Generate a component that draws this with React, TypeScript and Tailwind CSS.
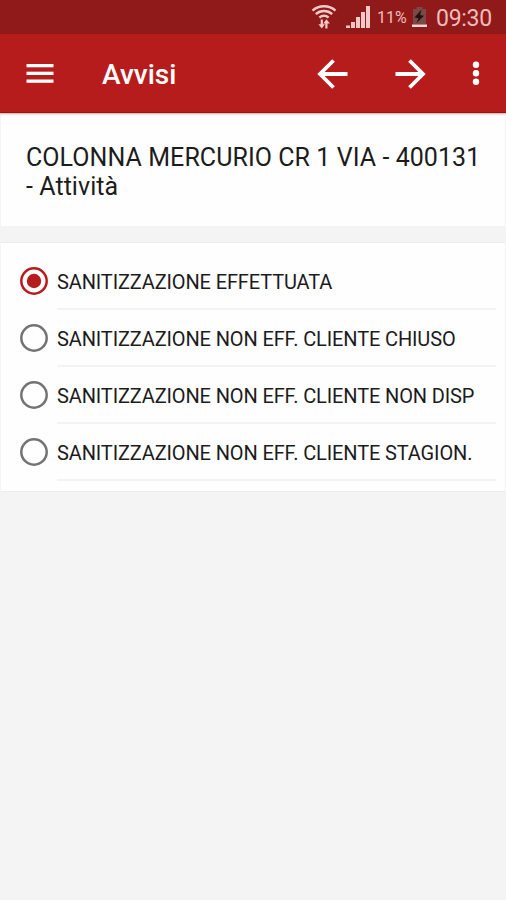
import { useState } from "react";
import clsx from "clsx";

const OPTIONS = [
  "SANITIZZAZIONE EFFETTUATA",
  "SANITIZZAZIONE NON EFF. CLIENTE CHIUSO",
  "SANITIZZAZIONE NON EFF. CLIENTE NON DISP",
  "SANITIZZAZIONE NON EFF. CLIENTE STAGION.",
];

function WifiIcon() {
  return (
    <svg width="26" height="24" viewBox="0 0 26 24" fill="none" stroke="#f3c9c7" strokeWidth="2.4">
      <path d="M1.5 5.6C8 -.2 18 -.2 24.5 5.6" />
      <path d="M4.8 9.2c4.6-4.2 11.8-4.2 16.4 0" />
      <path d="M8.4 12.6c2.6-2.4 6.6-2.4 9.2 0" />
      <path d="M10.8 20v-5.5M15.4 18v5.5" strokeWidth="2.2" />
      <path d="M7.4 19.3l3.4 4.2 3.2-4.2zM12.3 18.5l3.1-4.2 3.5 4.2z" fill="#f3c9c7" stroke="none" />
    </svg>
  );
}

function SignalIcon() {
  return (
    <svg width="24" height="22" viewBox="0 0 24 22" fill="#f3c9c7">
      <rect x="0" y="19.5" width="4" height="2.5" />
      <rect x="5" y="16" width="4" height="6" />
      <rect x="10" y="11" width="4" height="11" />
      <rect x="15" y="6" width="4" height="16" />
      <rect x="20" y="0" width="4" height="22" />
    </svg>
  );
}

function BatteryIcon() {
  return (
    <svg width="15" height="20" viewBox="0 0 15 20">
      <path d="M4.5 0h6v2H14v15H1V2h3.5z" fill="#7c4845" />
      <path d="M9.5 2.5L2.5 10.5l4 .8L4.5 16l7.5-7.2-4-.8z" fill="#1d1313" />
      <rect x="0" y="17.5" width="15" height="2.5" fill="#f8dcda" />
    </svg>
  );
}

function StatusBar() {
  return (
    <div className="flex h-[34px] items-start bg-[#901a1a] pl-[311px] text-[#f0bcba]">
      <div className="mt-[5px]"><WifiIcon /></div>
      <div className="mt-[6px] ml-[9px]"><SignalIcon /></div>
      <span className="mt-[8px] ml-[7px] w-[31px] text-[16px] leading-5 whitespace-nowrap">11%</span>
      <div className="mt-[7px] ml-[4px]"><BatteryIcon /></div>
      <span className="mt-[5px] ml-[9px] text-[23px] leading-7 tracking-[-0.3px] whitespace-nowrap">09:30</span>
    </div>
  );
}

function AppBar() {
  return (
    <header className="relative z-10 flex h-[79px] items-center border-b border-[#a30d0d] bg-[#b71c1c] text-white shadow-[0_1px_2px_rgba(90,0,0,0.35)]">
      <button aria-label="Menu" className="ml-[26px] pt-px">
        <svg width="28" height="20" viewBox="0 0 28 20" fill="currentColor">
          <rect x="0.5" y="0" width="27" height="3.3" />
          <rect x="0.5" y="7.7" width="27" height="3.3" />
          <rect x="0.5" y="15.5" width="27" height="3.3" />
        </svg>
      </button>
      <h1 className="ml-[48px] w-[77px] pt-[4px] text-[28px] leading-8 font-medium whitespace-nowrap">Avvisi</h1>
      <button aria-label="Indietro" className="ml-[138px] pt-px">
        <svg width="32" height="32" viewBox="0 0 32 32" fill="none" stroke="currentColor" strokeWidth="3.8">
          <path d="M30.5 16H4M16.5 2.5L3 16l13.5 13.5" />
        </svg>
      </button>
      <button aria-label="Avanti" className="ml-[46px] pt-px">
        <svg width="32" height="32" viewBox="0 0 32 32" fill="none" stroke="currentColor" strokeWidth="3.8">
          <path d="M.5 16H27M14.5 2.5l13.5 13.5-13.5 13.5" />
        </svg>
      </button>
      <button aria-label="Altro" className="ml-[45px]">
        <svg width="8" height="24" viewBox="0 0 8 24" fill="currentColor">
          <circle cx="4" cy="3.7" r="3.2" />
          <circle cx="4" cy="12.3" r="3.2" />
          <circle cx="4" cy="20.7" r="3.2" />
        </svg>
      </button>
    </header>
  );
}

function Radio({ checked }: { checked: boolean }) {
  return (
    <svg width="28" height="28" viewBox="0 0 28 28" className={clsx("mb-[2px] shrink-0", checked ? "text-[#b71c1c]" : "text-[#737373]")}>
      <circle cx="14" cy="14" r="12.7" fill="none" stroke="currentColor" strokeWidth="2.5" />
      {checked && <circle cx="14" cy="14" r="7.2" fill="currentColor" />}
    </svg>
  );
}

export default function App() {
  const [selected, setSelected] = useState(0);

  return (
    <div className="h-[900px] w-[506px] overflow-hidden bg-[#f4f4f4] font-[Roboto,sans-serif] text-[#1c1c1c]">
      <StatusBar />
      <AppBar />

      <section className="mx-px h-[113px] bg-[#fefefe] pt-[30px] pl-[25px] text-[25px] leading-[29px] tracking-[0.06px]">
        <p className="whitespace-nowrap">COLONNA MERCURIO CR 1 VIA - 400131</p>
        <p>- Attività</p>
      </section>

      <section className="mx-px mt-4 h-[250px] border-y border-[#ececec] bg-[#fefefe] pt-[10px] pl-[19px]">
        {OPTIONS.map((label, i) => (
          <button
            key={label}
            onClick={() => setSelected(i)}
            className="flex h-[57px] w-full items-center text-left"
          >
            <Radio checked={selected === i} />
            <span className="ml-[9px] flex h-full w-[439px] items-center border-b-2 border-[#f3f3f3] pt-[3px] text-[20px] tracking-[-0.13px] whitespace-nowrap">
              {label}
            </span>
          </button>
        ))}
      </section>
    </div>
  );
}
